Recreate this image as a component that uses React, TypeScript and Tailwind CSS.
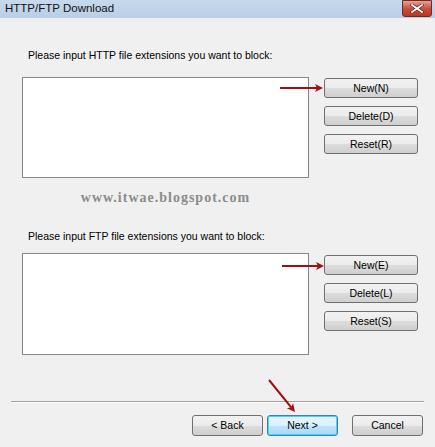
import React from 'react';

const btnBase =
  'rounded-[3px] border border-[#707070] bg-[linear-gradient(#f2f2f2_0%,#ebebeb_50%,#dddddd_50%,#cfcfcf_100%)] text-[10.5px] leading-none text-black flex items-center justify-center';

function Arrow({ x1, y1, x2, y2 }: { x1: number; y1: number; x2: number; y2: number }) {
  const ang = Math.atan2(y2 - y1, x2 - x1);
  const len = 8;
  const w = 4;
  const bx = x2 - len * Math.cos(ang);
  const by = y2 - len * Math.sin(ang);
  const px = -Math.sin(ang) * w;
  const py = Math.cos(ang) * w;
  return (
    <g>
      <line x1={x1} y1={y1} x2={bx + Math.cos(ang) * 2} y2={by + Math.sin(ang) * 2} stroke="#a30f0f" strokeWidth={2} />
      <polygon points={`${x2},${y2} ${bx + px},${by + py} ${bx + 2 * Math.cos(ang)},${by + 2 * Math.sin(ang)} ${bx - px},${by - py}`} fill="#a30f0f" />
    </g>
  );
}

function Section({ label, keys, boxH, btnPad }: { label: string; keys: string[]; boxH: string; btnPad: string }) {
  return (
    <>
      <p className="leading-[13px] pl-[6px]">{label}</p>
      <div className="flex items-start">
        <div className={`w-[287px] ${boxH} bg-white border border-[#828790]`} />
        <div className={`ml-[15px] ${btnPad} flex flex-col gap-[8px]`}>
          {keys.map((k) => (
            <div key={k} className={`${btnBase} w-[94px] h-[20px]`}>{k}</div>
          ))}
        </div>
      </div>
    </>
  );
}

export default function App() {
  return (
    <div className="relative w-[435px] h-[447px] overflow-hidden bg-[#f0f0f0] text-[10.5px] text-black font-['Liberation_Sans',Arial,sans-serif]">
      {/* Title bar */}
      <div className="h-[18px] flex items-center justify-between bg-[linear-gradient(#c7d9ec,#b9cee6)] pl-[5px] pr-[3px]">
        <span className="text-[11.5px] leading-none text-[#111]">HTTP/FTP Download</span>
        <div className="w-[30px] h-[17px] -mt-[1px] rounded-b-[3px] border border-[#6d2a26] bg-[linear-gradient(#e7a193,#c7503f_50%,#b8381f)] flex items-center justify-center">
          <svg width="14" height="9" viewBox="0 0 14 9">
            <path d="M2 1 L12 8 M12 1 L2 8" stroke="#5a2622" strokeWidth="3.2" strokeLinecap="square" />
            <path d="M2 1 L12 8 M12 1 L2 8" stroke="#fff" strokeWidth="1.8" strokeLinecap="square" />
          </svg>
        </div>
      </div>

      <div className="pl-[22px] pt-[31px]">
        <Section
          label="Please input HTTP file extensions you want to block:"
          keys={['New(N)', 'Delete(D)', 'Reset(R)']}
          boxH="h-[101px] mt-[15px]"
          btnPad="mt-[16px]"
        />
        <p className="w-[287px] mt-[12px] leading-[16px] text-center text-[14px] tracking-[1px] font-bold text-[#8c8c8c] font-['Liberation_Serif','Times_New_Roman',serif]">
          www.itwae.blogspot.com
        </p>
        <div className="mt-[24px]">
          <Section
            label="Please input FTP file extensions you want to block:"
            keys={['New(E)', 'Delete(L)', 'Reset(S)']}
            boxH="h-[102px] mt-[10px]"
            btnPad="mt-[12px]"
          />
        </div>
      </div>

      {/* Separator */}
      <div className="mx-[11px] mt-[46px] h-[2px] border-t border-[#a0a0a0] border-b border-b-white" />

      {/* Wizard buttons */}
      <div className="flex justify-end pr-[12px] mt-[12px]">
        <div className={`${btnBase} w-[71px] h-[21px]`}>&lt; Back</div>
        <div className="ml-[4px] w-[71px] h-[21px] rounded-[3px] border border-[#3c7fb1] shadow-[inset_0_0_0_1px_#48d3fb] bg-[linear-gradient(#eaf6fd_0%,#d9f0fc_50%,#bee6fd_50%,#a7d9f5_100%)] flex items-center justify-center leading-none">
          Next &gt;
        </div>
        <div className={`${btnBase} ml-[14px] w-[71px] h-[21px]`}>Cancel</div>
      </div>

      {/* Annotation arrows */}
      <svg className="absolute inset-0 pointer-events-none" width="435" height="447">
        <Arrow x1={280} y1={88} x2={323} y2={88} />
        <Arrow x1={282} y1={266} x2={324} y2={266} />
        <Arrow x1={269} y1={380} x2={295} y2={412} />
      </svg>
    </div>
  );
}
